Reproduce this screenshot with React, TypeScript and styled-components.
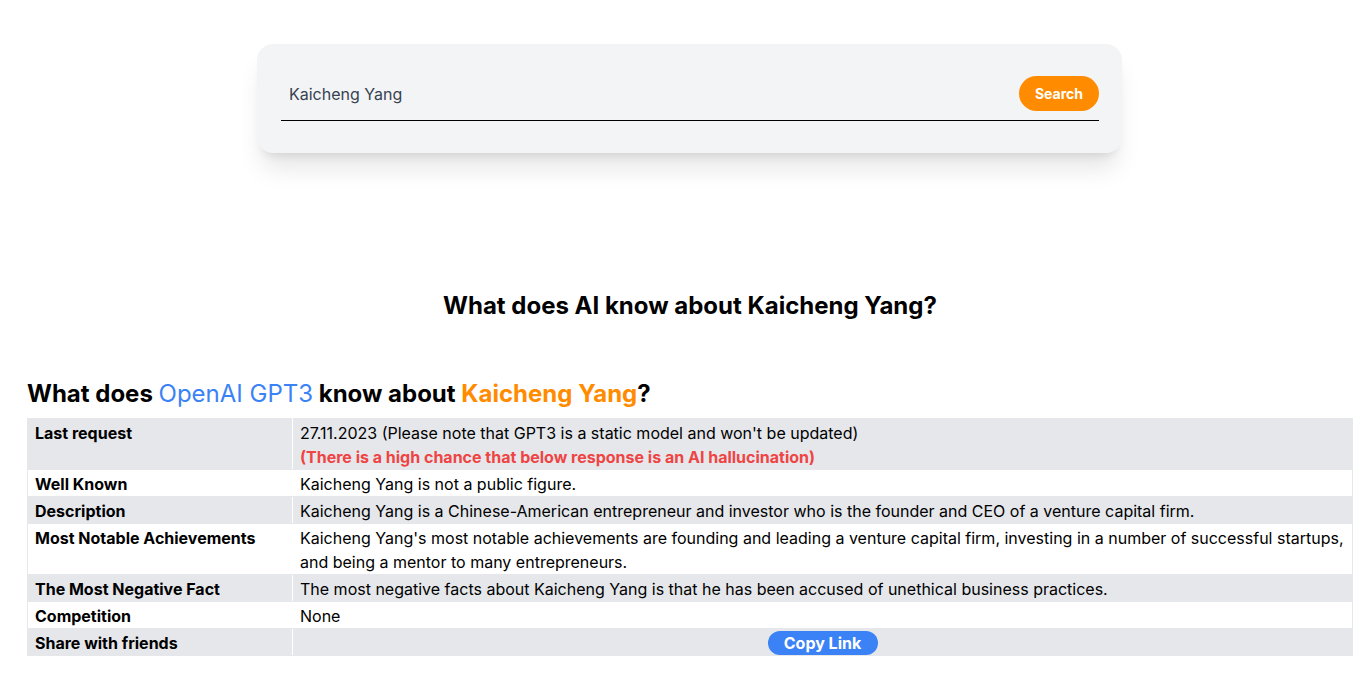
import React, { FC, useState } from 'react'
import styled, { createGlobalStyle } from 'styled-components'

const GlobalStyle = createGlobalStyle`
    html, body {
        margin: 0;
        padding: 0;
        background: #ffffff;
        font-family: Inter, 'Noto Sans', sans-serif;
        color: #000000;
    }
    * {
        box-sizing: border-box;
    }
`

export const Page = styled.div`
    padding: 44px 14px 40px 27px;
    display: flex;
    flex-direction: column;
    align-items: center;
`

export const SearchCard = styled.form`
    width: 865px;
    margin-right: 1px;
    padding: 32px 23px 32px 24px;
    background: #f3f4f6;
    border-radius: 16px;
    box-shadow: 0 20px 25px -5px rgba(0, 0, 0, 0.1), 0 8px 10px -6px rgba(0, 0, 0, 0.1);
`

export const SearchRow = styled.div`
    display: flex;
    align-items: center;
    height: 45px;
    padding: 0 0 9px 8px;
    border-bottom: 1px solid #000000;
`

export const SearchInput = styled.input`
    flex: 1;
    border: none;
    outline: none;
    background: transparent;
    font-family: Inter, sans-serif;
    font-size: 16px;
    color: #374151;
    padding: 0;
    margin: 0;
`

export const SearchBtn = styled.button`
    width: 80px;
    height: 35px;
    border: none;
    border-radius: 9999px;
    background: #ff8c00;
    color: #ffffff;
    font-family: Inter, sans-serif;
    font-weight: 700;
    font-size: 14px;
    cursor: pointer;
`

export const Title = styled.h2`
    margin: 137px 0 0 0;
    font-size: 24px;
    font-weight: 700;
    line-height: 32px;
    text-align: center;
`

export const Section = styled.section`
    width: 100%;
    margin-top: 56px;
`

export const SubTitle = styled.h3`
    margin: 0 0 8px 0;
    font-size: 24px;
    font-weight: 700;
    line-height: 32px;
`

export const Model = styled.span`
    color: #3b82f6;
    font-weight: 400;
`

export const Person = styled.span`
    color: #ff8c00;
`

export const Table = styled.table`
    width: 100%;
    border-collapse: collapse;
    font-size: 16px;
    line-height: 24px;
`

export const Row = styled.tr<{ $shade: boolean }>`
    background: ${(p) => (p.$shade ? '#e5e7eb' : '#ffffff')};
`

export const Label = styled.td`
    width: 265px;
    padding: 2px 7px 0 7px;
    font-weight: 700;
    vertical-align: top;
    border: 1px solid #e5e7eb;
    border-right: 1px solid #ffffff;
`

export const Value = styled.td<{ $center?: boolean }>`
    padding: ${(p) => (p.$center ? '2px 7px 0 7px' : '2px 4px 0 7px')};
    vertical-align: top;
    text-align: ${(p) => (p.$center ? 'center' : 'left')};
    border: 1px solid #e5e7eb;
`

export const Warning = styled.div`
    color: #ef4444;
    font-weight: 700;
`

export const CopyBtn = styled.button`
    width: 110px;
    height: 24px;
    border: none;
    border-radius: 9999px;
    background: #3b82f6;
    color: #ffffff;
    font-family: Inter, sans-serif;
    font-weight: 700;
    font-size: 16px;
    line-height: 24px;
    padding: 0;
    vertical-align: top;
    cursor: pointer;
`

const rows: { label: string; value: string }[] = [
    { label: 'Well Known', value: 'Kaicheng Yang is not a public figure.' },
    {
        label: 'Description',
        value: 'Kaicheng Yang is a Chinese-American entrepreneur and investor who is the founder and CEO of a venture capital firm.',
    },
    {
        label: 'Most Notable Achievements',
        value: "Kaicheng Yang's most notable achievements are founding and leading a venture capital firm, investing in a number of successful startups, and being a mentor to many entrepreneurs.",
    },
    {
        label: 'The Most Negative Fact',
        value: 'The most negative facts about Kaicheng Yang is that he has been accused of unethical business practices.',
    },
    { label: 'Competition', value: 'None' },
]

const App: FC = () => {
    const [query, setQuery] = useState('Kaicheng Yang')

    return (
        <>
            <GlobalStyle />
            <Page>
                <SearchCard onSubmit={(e) => e.preventDefault()}>
                    <SearchRow>
                        <SearchInput value={query} onChange={(e) => setQuery(e.target.value)} />
                        <SearchBtn type="submit">Search</SearchBtn>
                    </SearchRow>
                </SearchCard>

                <Title>What does AI know about Kaicheng Yang?</Title>

                <Section>
                    <SubTitle>
                        What does <Model>OpenAI GPT3</Model> know about <Person>Kaicheng Yang</Person>?
                    </SubTitle>
                    <Table>
                        <tbody>
                            <Row $shade>
                                <Label>Last request</Label>
                                <Value>
                                    27.11.2023 (Please note that GPT3 is a static model and won't be updated)
                                    <Warning>(There is a high chance that below response is an AI hallucination)</Warning>
                                </Value>
                            </Row>
                            {rows.map((r, i) => (
                                <Row key={r.label} $shade={i % 2 === 1}>
                                    <Label>{r.label}</Label>
                                    <Value>{r.value}</Value>
                                </Row>
                            ))}
                            <Row $shade>
                                <Label>Share with friends</Label>
                                <Value $center>
                                    <CopyBtn type="button">Copy Link</CopyBtn>
                                </Value>
                            </Row>
                        </tbody>
                    </Table>
                </Section>
            </Page>
        </>
    )
}

export default App
